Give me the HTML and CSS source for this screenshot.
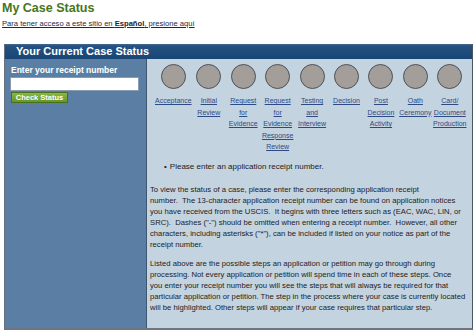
FILE: index.html
```html
<!DOCTYPE html>
<html lang="en">
<head>
  <meta charset="UTF-8" />
  <meta name="viewport" content="width=device-width, initial-scale=1.0" />
  <title>My Case Status</title>
  <link rel="stylesheet" href="styles.css">
</head>
<body>
  <h1 class="page-title">My Case Status</h1>
  <a href="#" class="spanish-link">Para tener acceso a este sitio en <b>Español</b>, presione aquí</a>

  <div class="case-box">
    <div class="case-header">Your Current Case Status</div>

    <div class="case-body">
      <form class="lookup" onsubmit="return false;">
        <label for="receiptNum">Enter your receipt number</label>
        <input type="text" id="receiptNum">
        <button type="submit" class="check-button">Check Status</button>
      </form>

      <div class="status-panel">
        <div class="steps">
          <div class="step"><span class="dot"></span><a href="#">Acceptance</a></div>
          <div class="step"><span class="dot"></span><a href="#">Initial Review</a></div>
          <div class="step"><span class="dot"></span><a href="#">Request for Evidence</a></div>
          <div class="step"><span class="dot"></span><a href="#">Request for Evidence Response Review</a></div>
          <div class="step"><span class="dot"></span><a href="#">Testing and Interview</a></div>
          <div class="step"><span class="dot"></span><a href="#">Decision</a></div>
          <div class="step"><span class="dot"></span><a href="#">Post Decision Activity</a></div>
          <div class="step"><span class="dot"></span><a href="#">Oath Ceremony</a></div>
          <div class="step"><span class="dot"></span><a href="#">Card/ Document Production</a></div>
        </div>

        <ul class="messages">
          <li>Please enter an application receipt number.</li>
        </ul>

        <p>To view the status of a case, please enter the corresponding application receipt<br>
        number.&nbsp; The 13-character application receipt number can be found on application notices<br>
        you have received from the USCIS.&nbsp; It begins with three letters such as (EAC, WAC, LIN, or<br>
        SRC).&nbsp; Dashes ("-") should be omitted when entering a receipt number.&nbsp; However, all other<br>
        characters, including asterisks ("*"), can be included if listed on your notice as part of the<br>
        receipt number.</p>

        <p>Listed above are the possible steps an application or petition may go through during<br>
        processing. Not every application or petition will spend time in each of these steps. Once<br>
        you enter your receipt number you will see the steps that will always be required for that<br>
        particular application or petition. The step in the process where your case is currently located<br>
        will be highlighted. Other steps will appear if your case requires that particular step.</p>
      </div>
    </div>
  </div>
</body>
</html>
```

FILE: styles.css
```css
body {
  margin: 0;
  font-family: 'Liberation Sans', Arial, Helvetica, sans-serif;
  background-color: #fff;
  color: #222;
}
.page-title {
  margin: 0;
  padding: 1px 2px 0;
  font-size: 12.5px;
  line-height: 15px;
  color: #46761b;
}
.spanish-link {
  display: block;
  margin: 3px 2px 0;
  font-size: 7.6px;
  line-height: 10px;
  color: #1f2940;
}
.spanish-link b { color: #1a2238; }

.case-box {
  margin: 15px 1px 0 4px;
  border-left: 1px solid #66717d;
  border-right: 1px solid #4b5664;
  border-bottom: 2px solid #6f767d;
}
.case-header {
  height: 15px;
  line-height: 15px;
  padding-left: 11px;
  font-size: 11px;
  font-weight: bold;
  color: #fff;
  background: linear-gradient(#46698f 0, #24517f 2px, #184676 100%);
}
.case-body {
  display: flex;
}

/* left column: receipt lookup */
.lookup {
  width: 136px;
  flex-shrink: 0;
  padding: 6px 0 0 5px;
  background-color: #5b7fa4;
  border-right: 1px solid #3f5670;
}
.lookup label {
  display: block;
  padding-left: 1px;
  font-size: 8.5px;
  font-weight: bold;
  line-height: 10px;
  color: #fff;
}
.lookup input {
  display: block;
  box-sizing: border-box;
  width: 129px;
  height: 14px;
  margin-top: 2px;
  border: 1px solid #8a9bb0;
  background: #fff;
  padding: 0 2px;
}
.check-button {
  display: block;
  margin: 1px 0 0 1px;
  width: 57px;
  height: 11px;
  padding: 0;
  border: 1px solid #4c6f1e;
  background: linear-gradient(#8ab845, #64962a);
  color: #fff;
  font-family: inherit;
  font-size: 7.5px;
  font-weight: bold;
  line-height: 9px;
}

/* right column: status steps + help text */
.status-panel {
  flex: 1;
  background-color: #c4d3e0;
  padding: 5px 0 15px 3px;
  font-size: 7.7px;
  line-height: 11px;
}
.steps {
  display: grid;
  grid-template-columns: repeat(9, 1fr);
  margin: 0 0 0 5px;
  width: 312px;
}
.step {
  display: flex;
  flex-direction: column;
  align-items: center;
  text-align: center;
}
.dot {
  display: block;
  box-sizing: border-box;
  width: 25px;
  height: 25px;
  border-radius: 50%;
  border: 1.5px solid #4e5156;
  background-color: #a39e99;
}
.step a {
  margin-top: 6px;
  font-size: 7px;
  line-height: 11.5px;
  color: #2c4b86;
  word-spacing: 100px; /* one word per line, like the narrow table cells */
}
.messages {
  margin: 8px 0 0;
  padding-left: 14px;
  list-style: none;
  font-size: 8px;
}
.messages li::before {
  content: "\2022";
  margin-right: 3px;
}
.status-panel p {
  margin: 12px 0 0;
  white-space: nowrap;
}
.status-panel p + p {
  margin-top: 8px;
}
```
